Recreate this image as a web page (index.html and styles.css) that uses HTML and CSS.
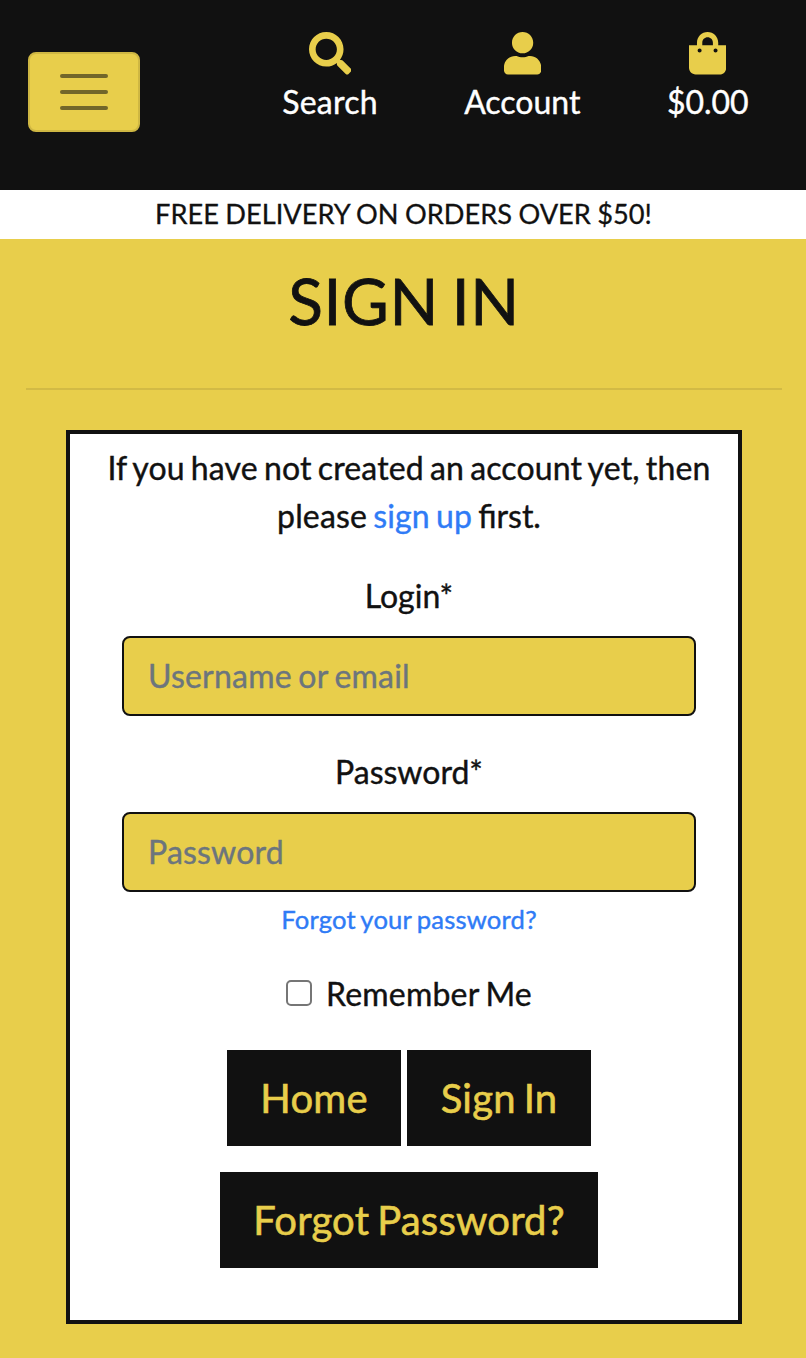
FILE: index.html
```html
<!DOCTYPE html>
<html lang="en">
<head>
<meta charset="utf-8">
<title>Sign In</title>
<link rel="stylesheet" href="styles.css">
</head>
<body>
<header class="header">
  <button class="toggler" aria-label="Menu"><svg viewBox="0 0 30 30" width="60" height="60"><path d="M4 7h22M4 15h22M4 23h22" stroke="#111" stroke-opacity=".55" stroke-width="2" stroke-linecap="round"/></svg></button>
  <nav class="nav">
    <a class="nav-item search"><svg class="icon" viewBox="0 0 512 512"><path d="M505 442.7L405.3 343c-4.5-4.5-10.6-7-17-7H372c27.6-35.3 44-79.7 44-128C416 93.1 322.9 0 208 0S0 93.1 0 208s93.1 208 208 208c48.300 0 92.700-16.400 128-44v16.300c0 6.400 2.500 12.500 7 17l99.700 99.700c9.400 9.400 24.600 9.400 33.900 0l28.300-28.300c9.400-9.400 9.400-24.600.1-34zM208 336c-70.700 0-128-57.200-128-128 0-70.700 57.200-128 128-128 70.700 0 128 57.200 128 128 0 70.700-57.200 128-128 128z"/></svg><span>Search</span></a>
    <a class="nav-item account"><svg class="icon" viewBox="0 0 448 512"><path d="M224 256c70.700 0 128-57.300 128-128S294.700 0 224 0 96 57.300 96 128s57.300 128 128 128zm89.600 32h-16.700c-22.200 10.200-46.900 16-72.900 16s-50.600-5.800-72.900-16h-16.700C60.200 288 0 348.200 0 422.400V464c0 26.500 21.500 48 48 48h352c26.500 0 48-21.500 48-48v-41.600c0-74.200-60.200-134.400-134.400-134.400z"/></svg><span>Account</span></a>
    <a class="nav-item bag"><svg class="icon" viewBox="0 0 448 512"><path d="M352 160v-32C352 57.420 294.579 0 224 0 153.420 0 96 57.420 96 128v32H0v272c0 44.183 35.817 80 80 80h288c44.183 0 80-35.817 80-80V160h-96zm-192-32c0-35.290 28.710-64 64-64s64 28.710 64 64v32H160v-32zm160 120c-13.255 0-24-10.745-24-24s10.745-24 24-24 24 10.745 24 24-10.745 24-24 24zm-192 0c-13.255 0-24-10.745-24-24s10.745-24 24-24 24 10.745 24 24-10.745 24-24 24z"/></svg><span>$0.00</span></a>
  </nav>
</header>
<div class="banner">FREE DELIVERY ON ORDERS OVER $50!</div>
<main class="main">
  <h1 class="title">SIGN IN</h1>
  <hr class="rule">
  <section class="card">
    <p class="intro">If you have not created an account yet, then<br>please <a class="link">sign up</a> <span class="ligature">first.</span></p>
    <form class="form">
      <label class="label" for="login">Login*</label>
      <input class="input" id="login" type="text" placeholder="Username or email">
      <label class="label second" for="password">Password*</label>
      <input class="input" id="password" type="password" placeholder="Password">
      <a class="link forgot">Forgot your password?</a>
      <label class="remember"><input class="check" type="checkbox"><span>Remember Me</span></label>
      <div class="buttons"><button class="btn home" type="button">Home</button><button class="btn signin" type="button">Sign In</button></div>
      <button class="btn reset" type="button">Forgot Password?</button>
    </form>
  </section>
</main>
</body>
</html>
```
FILE: styles.css
```css
* { box-sizing: border-box; }
body { margin: 0; background: #e8ce4b; color: #111; font: 32px/48px Lato, sans-serif; -webkit-text-stroke: 0.4px currentColor; }
.header { height: 190px; background: #111; display: flex; align-items: flex-start; padding: 0 28px; }
.toggler { width: 112px; height: 80px; margin-top: 52px; padding: 0; border: 2px solid #cfb743; border-radius: 8px; background: #e8ce4b; display: flex; align-items: center; justify-content: center; }
.nav { display: flex; flex: 1; padding-top: 32px; }
.nav-item { display: flex; flex-direction: column; align-items: center; color: #fff; white-space: nowrap; }
.icon { height: 42.5px; fill: #e8ce4b; }
.nav-item span { margin-top: 3.4px; }
.search { width: 98px; margin-left: 141px; }
.search span { letter-spacing: 0.2px; }
.account { width: 118px; margin-left: 84.300px; }
.bag { width: 82px; margin-left: 85.500px; }
.banner { height: 49px; background: #fff; text-align: center; font-size: 27.2px; line-height: 48px; word-spacing: -0.5px; padding-left: 1px; -webkit-text-stroke-width: 0.3px; }
.main { padding: 23px 24px 34px 26px; }
.title { margin: 0; font-size: 64px; line-height: 77px; font-weight: 400; text-align: center; letter-spacing: 0.6px; word-spacing: -4px; -webkit-text-stroke-width: 0.8px; }
.rule { height: 2px; margin: 49px 0 40px; border: 0; background: #d2ba45; }
.card { margin: 0 40px; height: 894px; border: 4px solid #111; background: #fff; padding: 10px 14px 0 24px; text-align: center; }
.intro { margin: 0 -10px; letter-spacing: 0.15px; word-spacing: -2.2px; }
.ligature { letter-spacing: 0; }
.link { color: #2f7bf6; }
.form { display: flex; flex-direction: column; align-items: center; margin-top: 32px; }
.label { display: block; }
.input { width: 574px; height: 80px; margin-top: 16px; border: 2px solid #111; border-radius: 8px; background: #e8ce4b; color: #111; padding: 0 24px 1px; font: inherit; letter-spacing: 0.2px; word-spacing: -1.8px; }
.input::placeholder { color: #6c757d; opacity: 1; }
.second { margin-top: 32px; }
.forgot { font-size: 25.6px; line-height: 38px; margin-top: 8px; letter-spacing: 0.2px; word-spacing: -1.6px; }
.remember { display: flex; align-items: center; gap: 14px; margin-top: 32px; letter-spacing: 0.2px; word-spacing: -1.8px; }
.check { appearance: none; width: 26px; height: 26px; margin: 0 0 2px; border: 2px solid #767676; border-radius: 5px; background: #fff; }
.buttons { display: flex; gap: 6px; margin-top: 32px; }
.btn { height: 96px; border: 0; background: #111; color: #e8ce4b; font: 40px/60px Lato, sans-serif; white-space: nowrap; padding: 0; letter-spacing: 0.2px; word-spacing: -2.4px; -webkit-text-stroke: 0.6px currentColor; }
.home { width: 174px; }
.signin { width: 184px; }
.reset { width: 378px; margin-top: 26px; }
```
